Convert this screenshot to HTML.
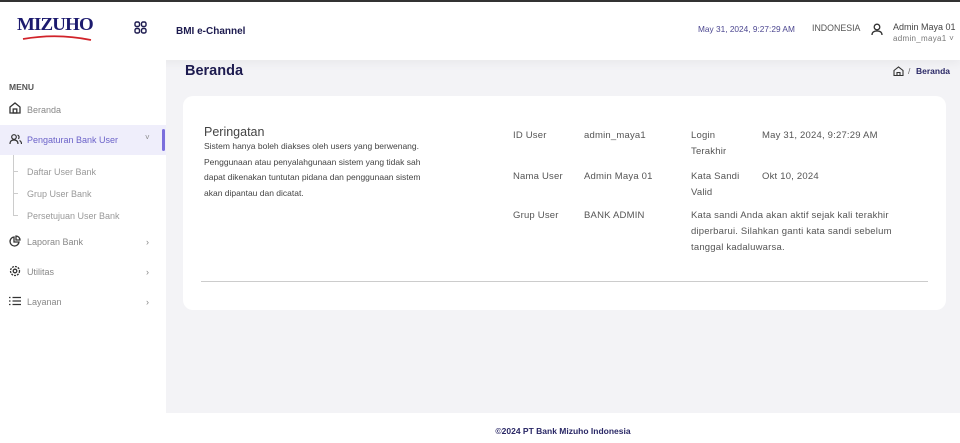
<!DOCTYPE html>
<html><head><meta charset="utf-8"><style>
*{margin:0;padding:0;box-sizing:border-box}
html,body{width:960px;height:443px;overflow:hidden}
body{background:#f3f3f6;font-family:"Liberation Sans",sans-serif;position:relative;color:#444}
.abs{position:absolute}
.top{left:0;top:0;width:960px;height:2px;background:#333}
.hdr{left:0;top:2px;width:960px;height:58px;background:#fff;box-shadow:0 4px 8px rgba(0,0,0,.04)}
.side{left:0;top:60px;width:166px;height:383px;background:#fff}
.sm{font-size:9px;color:#888}
.foot{left:166px;top:413px;width:794px;height:30px;background:#fff;text-align:center;font-size:8.5px;font-weight:bold;color:#2a2866;line-height:36px}
.card{left:183px;top:96px;width:763px;height:214px;background:#fff;border-radius:10px}
.t{font-size:9.5px;color:#555;letter-spacing:.2px;line-height:16px}
</style></head><body>
<div class="abs top"></div>
<div class="abs hdr"></div>
<div class="abs side"></div>
<div class="abs" style="left:17px;top:14px;font-family:'Liberation Serif',serif;font-weight:bold;font-size:18px;color:#1c1a6e;letter-spacing:-.8px;transform:scaleX(1.05);transform-origin:left">MIZUHO</div>
<svg class="abs" style="left:22px;top:34px" width="70" height="8"><path d="M1 5 Q35 -1 69 6" stroke="#d1232a" stroke-width="1.8" fill="none"/></svg>
<svg class="abs" style="left:134px;top:21px" width="13" height="13" fill="none" stroke="#1d1b4f" stroke-width="1.4"><rect x="1" y="1" width="4.5" height="4.5" rx="1.5"/><rect x="7.5" y="1" width="4.5" height="4.5" rx="1.5"/><rect x="1" y="7.5" width="4.5" height="4.5" rx="1.5"/><rect x="7.5" y="7.5" width="4.5" height="4.5" rx="1.5"/></svg>
<div class="abs" style="left:176px;top:26px;font-size:10px;font-weight:bold;color:#1d1b4f">BMI e-Channel</div>
<div class="abs" style="left:698px;top:24px;font-size:8.3px;color:#4c4790">May 31, 2024, 9:27:29 AM</div>
<div class="abs" style="left:812px;top:23px;font-size:8.8px;color:#555">INDONESIA</div>
<svg class="abs" style="left:871px;top:23px" width="12" height="13" fill="none" stroke="#333" stroke-width="1.3"><circle cx="6" cy="4" r="2.8"/><path d="M1 12 Q1 8 6 8 Q11 8 11 12"/></svg>
<div class="abs" style="left:893px;top:22px;font-size:9px;color:#444">Admin Maya 01</div>
<div class="abs" style="left:893px;top:34px;font-size:8px;color:#777;letter-spacing:.3px">admin_maya1 ˅</div>

<div class="abs" style="left:9px;top:82px;font-size:8.5px;font-weight:bold;color:#555">MENU</div>
<svg class="abs" style="left:9px;top:102px" width="12" height="12" fill="none" stroke="#333" stroke-width="1.3"><path d="M1 5 L6 1 L11 5 V11 H1 Z"/><rect x="4.2" y="7" width="3.6" height="4"/></svg>
<div class="abs sm" style="left:27px;top:105px">Beranda</div>
<div class="abs" style="left:0;top:125px;width:166px;height:30px;background:#efeefb"></div>
<div class="abs" style="left:162px;top:129px;width:3px;height:22px;background:#7b6fdc;border-radius:2px"></div>
<svg class="abs" style="left:9px;top:134px" width="13" height="11" fill="none" stroke="#333" stroke-width="1.2"><circle cx="5" cy="3" r="2.3"/><path d="M1 10 Q1 6 5 6 Q9 6 9 10"/><path d="M8.5 1 Q11 2 9.5 5 M10.5 6.5 Q12.5 7.5 12.5 10"/></svg>
<div class="abs" style="left:27px;top:135px;font-size:9px;color:#6c63c9">Pengaturan Bank User</div>
<div class="abs sm" style="left:145px;top:133px;font-size:8px">˅</div>
<div class="abs" style="left:13px;top:155px;width:1px;height:61px;background:#ccc"></div>
<div class="abs" style="left:13px;top:171px;width:5px;height:1px;background:#ccc"></div>
<div class="abs" style="left:13px;top:193px;width:5px;height:1px;background:#ccc"></div>
<div class="abs" style="left:13px;top:215px;width:5px;height:1px;background:#ccc"></div>
<div class="abs sm" style="left:27px;top:167px;color:#999">Daftar User Bank</div>
<div class="abs sm" style="left:27px;top:189px;color:#999">Grup User Bank</div>
<div class="abs sm" style="left:27px;top:211px;color:#999">Persetujuan User Bank</div>
<svg class="abs" style="left:9px;top:235px" width="12" height="12" fill="none" stroke="#333" stroke-width="1.3"><path d="M5 2 A4.5 4.5 0 1 0 10 7 H5 Z"/><path d="M7 1 A4 4 0 0 1 11 5 H7 Z"/></svg>
<div class="abs sm" style="left:27px;top:237px">Laporan Bank</div>
<div class="abs sm" style="left:146px;top:237px">›</div>
<svg class="abs" style="left:9px;top:265px" width="12" height="12" fill="none" stroke="#333" stroke-width="1.3"><circle cx="6" cy="6" r="4.5" stroke-dasharray="2 1"/><circle cx="6" cy="6" r="1.8"/></svg>
<div class="abs sm" style="left:27px;top:267px">Utilitas</div>
<div class="abs sm" style="left:146px;top:267px">›</div>
<svg class="abs" style="left:9px;top:296px" width="12" height="10" stroke="#333" stroke-width="1.2"><path d="M0 1.5H1.5M0 5H1.5M0 8.5H1.5M3.5 1.5H12M3.5 5H12M3.5 8.5H12"/></svg>
<div class="abs sm" style="left:27px;top:297px">Layanan</div>
<div class="abs sm" style="left:146px;top:297px">›</div>

<div class="abs" style="left:185px;top:63px;font-size:14.5px;font-weight:bold;color:#1d1b4f">Beranda</div>
<svg class="abs" style="left:893px;top:66px" width="11" height="10" fill="none" stroke="#333" stroke-width="1.1"><path d="M1 4.5 L5.5 1 L10 4.5 V9.5 H1 Z"/><path d="M4 9.5 V6.5 H7 V9.5"/></svg>
<div class="abs" style="left:908px;top:66px;font-size:8.5px;color:#666">/</div>
<div class="abs" style="left:916px;top:66px;font-size:8.5px;font-weight:bold;color:#2a2866">Beranda</div>

<div class="abs card"></div>
<div class="abs" style="left:204px;top:125px;font-size:12.5px;color:#444">Peringatan</div>
<div class="abs" style="left:204px;top:139px;font-size:8.5px;color:#444;line-height:15.7px;width:232px">Sistem hanya boleh diakses oleh users yang berwenang. Penggunaan atau penyalahgunaan sistem yang tidak sah dapat dikenakan tuntutan pidana dan penggunaan sistem akan dipantau dan dicatat.</div>
<div class="abs t" style="left:513px;top:128px">ID User</div>
<div class="abs t" style="left:584px;top:128px">admin_maya1</div>
<div class="abs t" style="left:691px;top:128px">Login<br>Terakhir</div>
<div class="abs t" style="left:762px;top:128px">May 31, 2024, 9:27:29 AM</div>
<div class="abs t" style="left:513px;top:169px">Nama User</div>
<div class="abs t" style="left:584px;top:169px">Admin Maya 01</div>
<div class="abs t" style="left:691px;top:169px">Kata Sandi<br>Valid</div>
<div class="abs t" style="left:762px;top:169px">Okt 10, 2024</div>
<div class="abs t" style="left:513px;top:208px">Grup User</div>
<div class="abs t" style="left:584px;top:208px">BANK ADMIN</div>
<div class="abs t" style="left:691px;top:208px;width:215px">Kata sandi Anda akan aktif sejak kali terakhir diperbarui. Silahkan ganti kata sandi sebelum tanggal kadaluwarsa.</div>
<div class="abs" style="left:201px;top:281px;width:727px;height:1px;background:#ccc"></div>

<div class="abs foot">©2024 PT Bank Mizuho Indonesia</div>
</body></html>
